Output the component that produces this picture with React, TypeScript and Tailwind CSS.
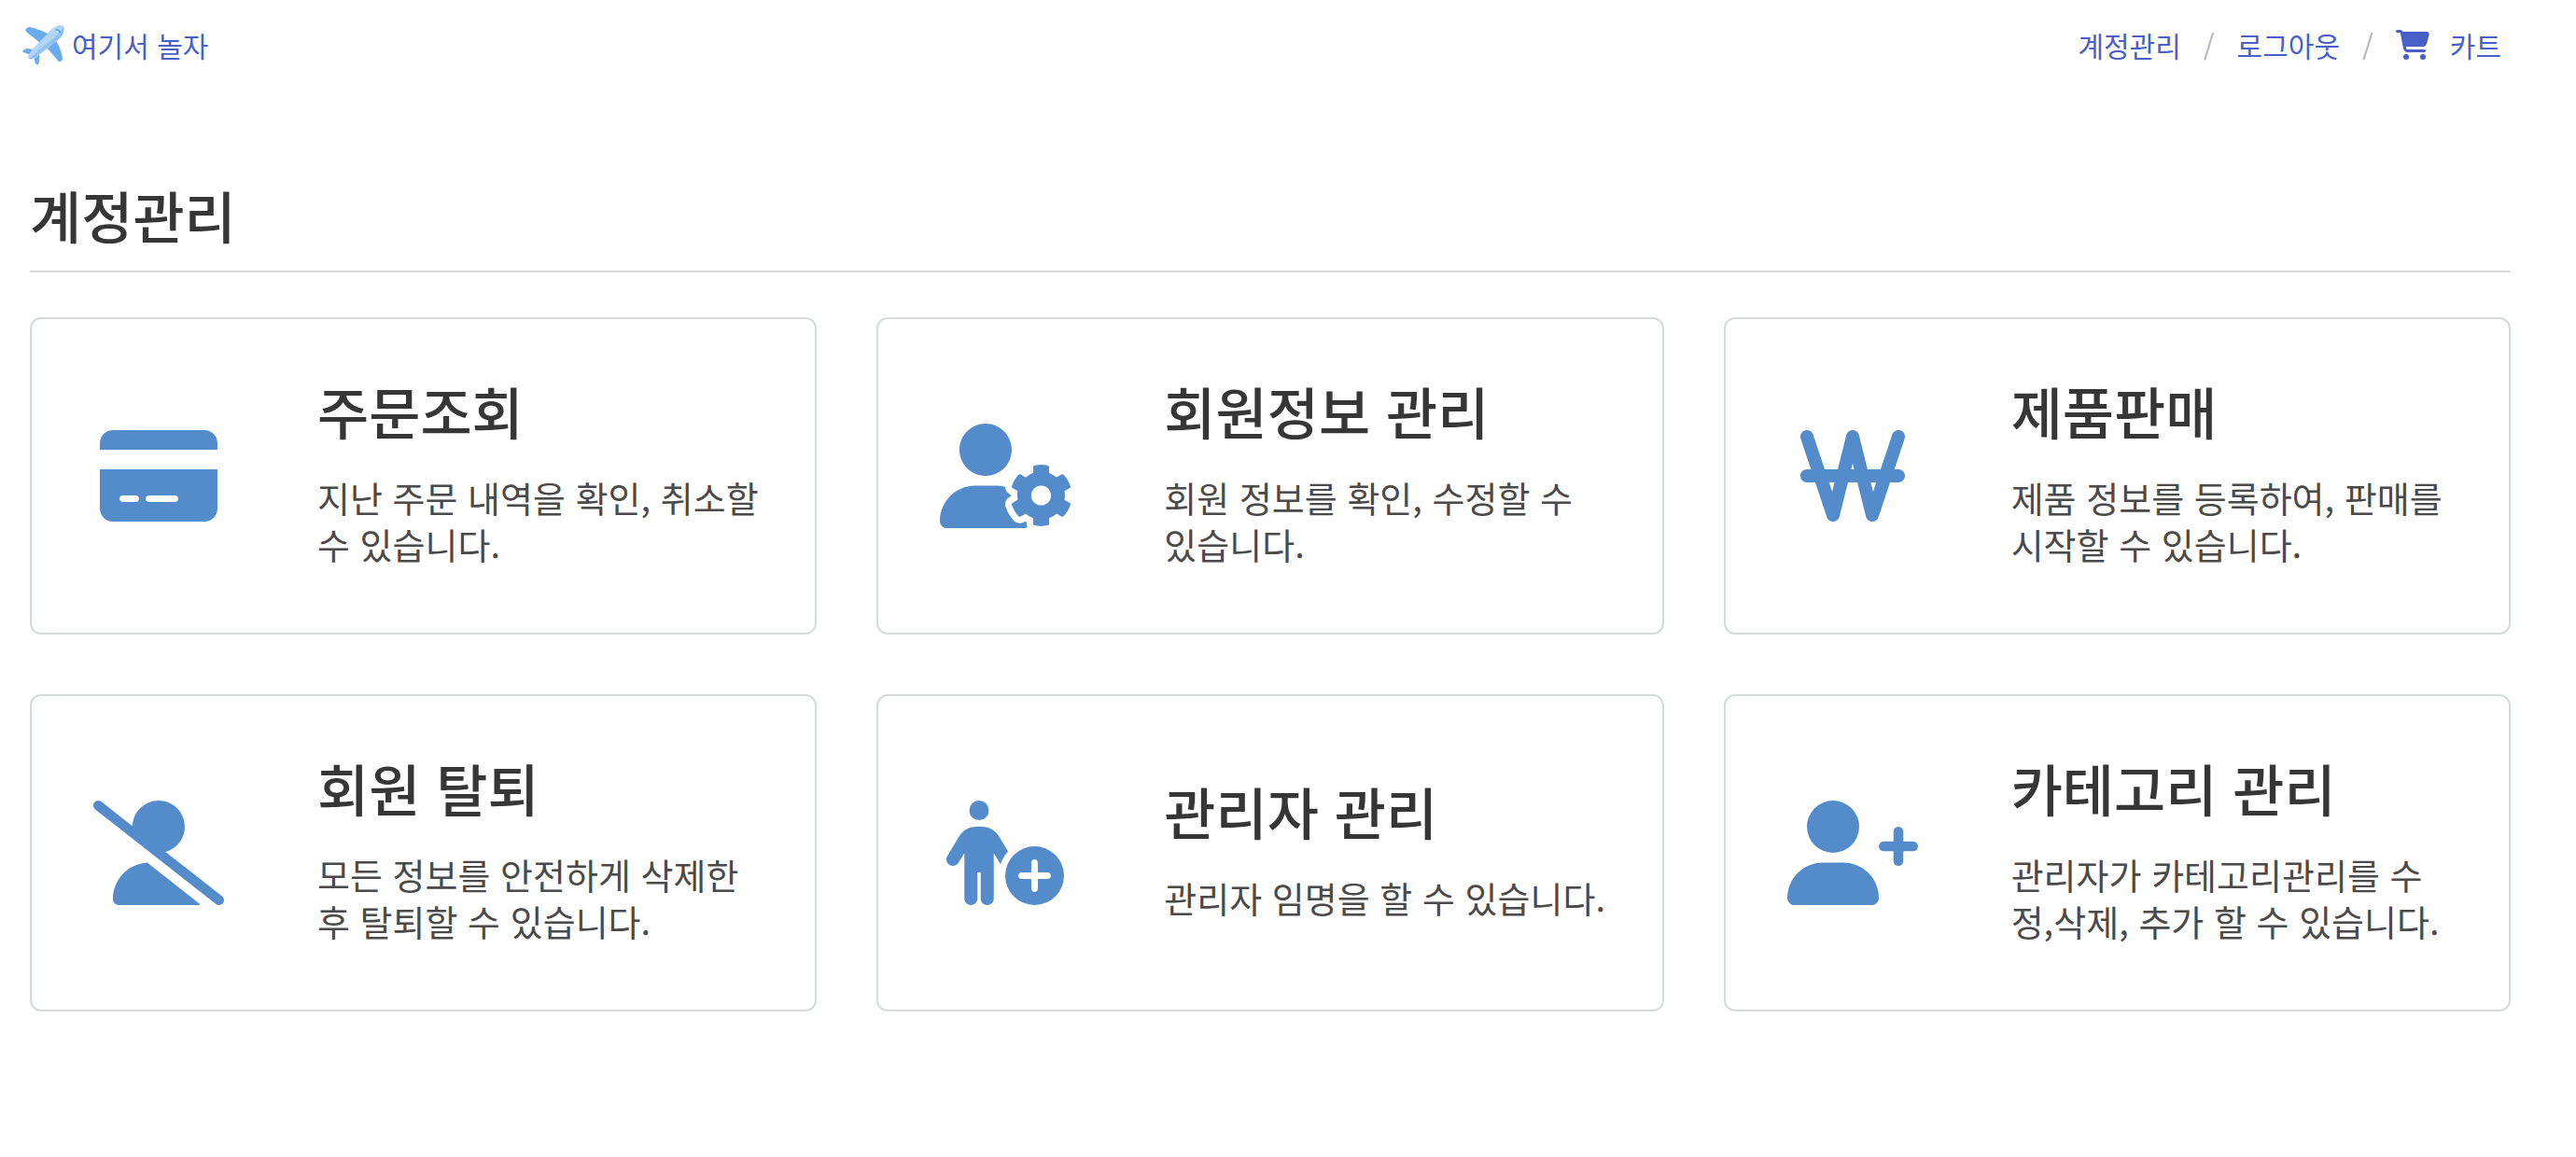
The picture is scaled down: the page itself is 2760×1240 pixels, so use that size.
import {
  FaCartShopping,
  FaCreditCard,
  FaPersonCirclePlus,
  FaUserSlash,
  FaWonSign,
} from "react-icons/fa6";
import type { ComponentType } from "react";

type Menu = { title: string; text: string; Icon: ComponentType<{ className?: string }> };

function UserGear({ className }: { className?: string }) {
  return (
    <svg viewBox="0 0 640 512" fill="currentColor" className={className} aria-hidden="true">
      <path d="M425.1 482.6c-2.303-1.25-4.572-2.559-6.809-3.93l-7.818 4.493c-6.002 3.504-12.83 5.352-19.75 5.352c-10.71 0-21.13-4.492-28.97-12.75c-18.41-20.09-32.29-44.15-40.22-69.9c-5.352-18.06 2.343-36.87 17.83-45.24l8.018-4.669c-.0664-2.621-.0664-5.242 0-7.859l-7.655-4.461c-12.3-6.953-19.4-19.66-19.64-33.38C305.6 306.3 290.4 304 274.7 304H173.3C77.61 304 0 381.7 0 477.4C0 496.5 15.52 512 34.66 512H413.3c5.727 0 10.9-1.727 15.66-4.188c-2.271-4.984-3.86-10.3-3.86-16.06V482.6zM224 256c70.7 0 128-57.31 128-128S294.7 0 224 0S96 57.31 96 128S153.3 256 224 256zM610.5 373.3c2.625-14 2.625-28.5 0-42.5l25.75-15c3-1.625 4.375-5.125 3.375-8.5c-6.75-21.5-18.25-41.13-33.25-57.38c-2.25-2.5-6-3.125-9-1.375l-25.75 14.88c-10.88-9.25-23.38-16.5-36.88-21.25V212.3c0-3.375-2.5-6.375-5.75-7c-22.25-5-45-4.875-66.25 0c-3.25 .625-5.625 3.625-5.625 7v29.88c-13.5 4.75-26 12-36.88 21.25L394.4 248.5c-2.875-1.75-6.625-1.125-9 1.375c-15 16.25-26.5 35.88-33.13 57.38c-1 3.375 .375 6.875 3.25 8.5l25.75 15c-2.5 14-2.5 28.5 0 42.5l-25.75 15c-3 1.625-4.25 5.125-3.25 8.5c6.625 21.5 18.13 41 33.13 57.38c2.375 2.5 6 3.125 9 1.375l25.88-14.88c10.88 9.25 23.38 16.5 36.88 21.25v29.88c0 3.375 2.375 6.375 5.625 7c22.38 5 45 4.875 66.25 0c3.25-.625 5.75-3.625 5.75-7v-29.88c13.5-4.75 26-12 36.88-21.25l25.75 14.88c2.875 1.75 6.75 1.125 9-1.375c15-16.25 26.5-35.88 33.25-57.38c1-3.375-.375-6.875-3.375-8.5L610.5 373.3zM496 400.5c-26.75 0-48.5-21.75-48.5-48.5s21.75-48.5 48.5-48.5c26.75 0 48.5 21.75 48.5 48.5S522.8 400.5 496 400.5z" />
    </svg>
  );
}

function UserPlus({ className }: { className?: string }) {
  return (
    <svg viewBox="0 0 640 512" fill="currentColor" className={className} aria-hidden="true">
      <circle cx="224" cy="128" r="128" />
      <path d="M274.7 304H173.3C77.6 304 0 381.6 0 477.3C0 496.5 15.5 512 34.7 512h378.6C432.5 512 448 496.5 448 477.3C448 381.6 370.4 304 274.7 304z" />
      <rect x="520" y="128" width="48" height="192" rx="24" />
      <rect x="448" y="200" width="192" height="48" rx="24" />
    </svg>
  );
}

const menus: Menu[] = [
  { title: "주문조회", text: "지난 주문 내역을 확인, 취소할 수 있습니다.", Icon: FaCreditCard },
  { title: "회원정보 관리", text: "회원 정보를 확인, 수정할 수 있습니다.", Icon: UserGear },
  { title: "제품판매", text: "제품 정보를 등록하여, 판매를 시작할 수 있습니다.", Icon: FaWonSign },
  { title: "회원 탈퇴", text: "모든 정보를 안전하게 삭제한 후 탈퇴할 수 있습니다.", Icon: FaUserSlash },
  { title: "관리자 관리", text: "관리자 임명을 할 수 있습니다.", Icon: FaPersonCirclePlus },
  { title: "카테고리 관리", text: "관리자가 카테고리관리를 수정,삭제, 추가 할 수 있습니다.", Icon: UserPlus },
];

function Plane() {
  return (
    <svg viewBox="0 0 45 43" className="h-[43px] w-[45px]" aria-hidden="true">
      <path d="M3.500 4.500Q4.500 2 7.500 2Q18 4 30 10.500L19 19L4 7Q3 6 3.500 4.500Z" fill="#6aabf0" />
      <path d="M36 17L27 25L38.500 38.500Q40 40 41.500 38.500L43 36.500Q42 26 36 17Z" fill="#6aabf0" />
      <path d="M0 28Q2 25 5 25L13 26L9 32L1 29Q0 28.700 0 28Z" fill="#6aabf0" />
      <path d="M12.500 36L18 31.500Q19 36 17.500 41L16 43Q13 40 12.500 36Z" fill="#6aabf0" />
      <path d="M44 1Q47 9 37 17L16 33Q10 37.500 7 36Q4.500 34 10 27L28 8Q37-2 44 1Z" fill="#8fc1f5" />
      <path d="M44 1Q41 8 33 14L7 36Q4.500 34 10 27L28 8Q37-2 44 1Z" fill="#b3d6f8" />
      <path d="M35.500 5Q39.500 4.500 41 8.500" fill="none" stroke="#5b9be4" strokeWidth="1.500" />
    </svg>
  );
}

function Slash() {
  return (
    <span className="text-[#b5b5b5]" aria-hidden="true">
      /
    </span>
  );
}

function MenuCard({ title, text, Icon }: Menu) {
  return (
    <a
      href="#"
      className="flex min-h-[340px] items-center gap-[98px] rounded-xl border-2 border-[#d5dbdb] py-12 pr-14 pl-16"
    >
      <span className="flex w-36 shrink-0 justify-center text-[#548ccb]">
        <Icon className="h-28 w-35" />
      </span>
      <span className="flex min-w-0 flex-1 flex-col gap-8 pb-2">
        <strong className="text-[60px] leading-[72px] font-medium text-[#363636]">{title}</strong>
        <span className="text-[38px] leading-[50px] text-[#4a4a4a]">{text}</span>
      </span>
    </a>
  );
}

export default function App() {
  return (
    <div lang="ko" className="min-h-screen bg-white font-['Noto_Sans_CJK_KR','Noto_Sans',sans-serif]">
      <header className="flex h-24 items-center justify-between pr-20 pl-6 text-[30px] text-[#485fc7]">
        <a href="#" className="flex items-center gap-2">
          <Plane />
          여기서 놀자
        </a>
        <nav className="flex items-center gap-6">
          <a href="#">계정관리</a>
          <Slash />
          <a href="#">로그아웃</a>
          <Slash />
          <a href="#" className="flex items-center gap-[22px]">
            <FaCartShopping className="h-8 w-9" />
            카트
          </a>
        </nav>
      </header>
      <main className="pt-[98px] pr-[70px] pl-8">
        <h1 className="border-b-2 border-[#dbdbdb] pb-6 text-[60px] leading-[72px] font-medium text-[#363636]">
          계정관리
        </h1>
        <div className="mt-12 grid grid-cols-3 gap-16">
          {menus.map((menu) => (
            <MenuCard key={menu.title} {...menu} />
          ))}
        </div>
      </main>
    </div>
  );
}
